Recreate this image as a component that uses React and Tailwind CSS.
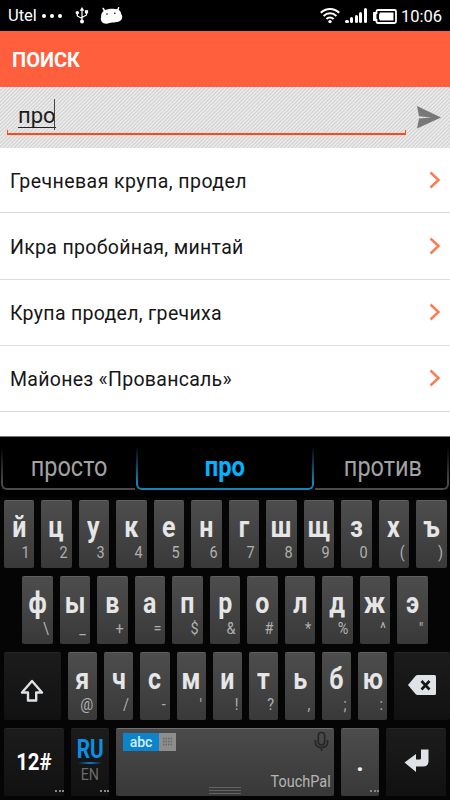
import React from "react";

const results = [
  { title: "Гречневая крупа, продел", height: "h-[65px]", tracking: "tracking-[0.440px]" },
  { title: "Икра пробойная, минтай", height: "h-[67px]", tracking: "tracking-[0.320px]" },
  { title: "Крупа продел, гречиха", height: "h-[66px]", tracking: "tracking-[0.310px]" },
  { title: "Майонез «Провансаль»", height: "h-[66px]", tracking: "tracking-[0.280px]" },
];

const topRow = [
  ["й", "1"],
  ["ц", "2"],
  ["у", "3"],
  ["к", "4"],
  ["е", "5"],
  ["н", "6"],
  ["г", "7"],
  ["ш", "8"],
  ["щ", "9"],
  ["з", "0"],
  ["х", "("],
  ["ъ", ")"],
];

const homeRow = [
  ["ф", "\\"],
  ["ы", "_"],
  ["в", "+"],
  ["а", "="],
  ["п", "$"],
  ["р", "&"],
  ["о", "#"],
  ["л", "*"],
  ["д", "%"],
  ["ж", "^"],
  ["э", "\""],
];

const bottomRow = [
  ["я", "@"],
  ["ч", "/"],
  ["с", "-"],
  ["м", "'"],
  ["и", "!"],
  ["т", "?"],
  ["ь", ","],
  ["б", ";"],
  ["ю", ":"],
];

const StatusBar = () => (
  <div className="flex h-[31px] items-center bg-black pl-2 pr-[8px] text-white">
    <span className="pt-[2px] text-[16.5px] leading-none">Utel</span>
    <div className="ml-[5px] flex gap-[4px] pt-px">
      <span className="size-1 rounded-full bg-white" />
      <span className="size-1 rounded-full bg-white" />
      <span className="size-1 rounded-full bg-white" />
    </div>
    {/* usb */}
    <svg className="ml-[13px]" width="14" height="17" viewBox="0 0 14 17" fill="none" stroke="white" strokeWidth="1.2">
      <path d="M7 3V14M7 11.5L2.3 9V6M7 10.5L11.5 8V5" />
      <path d="M7 0L9.3 3.8H4.7Z" fill="white" stroke="none" />
      <circle cx="7" cy="14.4" r="2" fill="white" stroke="none" />
      <circle cx="2.3" cy="5.8" r="1.7" fill="white" stroke="none" />
      <path d="M9.9 3.2h3.2v3.2H9.9z" fill="white" stroke="none" />
    </svg>
    {/* android head */}
    <svg className="ml-[11px]" width="23" height="17" viewBox="0 0 23 17">
      <path d="M3.2 1.5L5 4.5M18.6 .8L17.4 4" stroke="white" strokeWidth="1.5" strokeLinecap="round" />
      <path
        d="M4 3.5C8 1.5 14 1 18.5 2.5C20.5 4 21 5.5 21.2 7C22.8 9 22.5 11.5 21 13.3C18 16 13 15.2 9.5 16C6.5 17.2 3 16.7 1.8 14.8C.6 13 .4 11.5 1.2 10C.8 7.5 2 5.2 4 3.5Z"
        fill="white"
      />
      <circle cx="7" cy="7" r=".8" fill="black" />
      <circle cx="14.8" cy="6.3" r=".8" fill="black" />
    </svg>
    {/* wifi */}
    <svg className="ml-auto" width="20" height="17" viewBox="0 0 20 17" fill="none" stroke="white" strokeWidth="2">
      <path d="M.8 5.8C6 .6 14 .6 19.2 5.8" />
      <path d="M3.6 9C7.2 5.4 12.8 5.4 16.4 9" />
      <path d="M6.4 12C8.4 10 11.6 10 13.6 12" />
      <circle cx="10" cy="14.6" r="1.7" fill="white" stroke="none" />
    </svg>
    {/* signal */}
    <div className="ml-[5px] flex h-[15px] items-end gap-[1.5px]">
      <span className="size-[3.5px] rounded-full bg-white" />
      <span className="h-[6px] w-[3px] rounded-sm bg-white" />
      <span className="h-[8px] w-[3px] rounded-sm bg-white" />
      <span className="h-[11px] w-[3px] rounded-sm bg-white" />
      <span className="h-[15px] w-[3px] rounded-sm bg-white" />
    </div>
    {/* battery */}
    <svg className="ml-[6px] mt-px" width="24" height="15" viewBox="0 0 24 15">
      <path d="M5 1h16.5q1.5 0 1.5 1.5v10q0 1.5-1.5 1.5H5q-1.5 0-1.5-1.5V11H1V4h2.5V2.5Q3.5 1 5 1Z" fill="none" stroke="white" strokeWidth="1.8" />
      <path d="M.5 4h3v7h-3z" fill="white" />
      <path d="M7 3.5h13.5v8H7l-1-2V5.5z" fill="white" />
    </svg>
    <span className="ml-[4px] pt-[3px] text-[16.5px] leading-none">10:06</span>
  </div>
);

const SearchField = () => (
  <div className="flex h-[61px] bg-[repeating-linear-gradient(135deg,#d0d0d0_0px,#ededed_1.3px,#ededed_1.6px,#d0d0d0_2.65px)] pl-[7px]">
    <div className="flex h-[47.5px] w-[399px] flex-col justify-end">
      <div className="flex h-[31px] items-start pl-[11px]">
        <span className="mt-px h-[28px] border-b border-[#222] text-[22px] leading-[31px] text-[#1c1c1c]">про</span>
        <span className="-ml-[2px] h-[31px] w-px bg-[#444]" />
      </div>
      <div className="h-[5px] border-x-[1.5px] border-b-2 border-[#ff4a12]" />
    </div>
    <svg className="ml-[11px] mt-[18px]" width="25" height="25" viewBox="0 0 25 25">
      <path d="M0 1L24 12.5L0 23.5L2 13.5L14 12.4L2 11.3Z" fill="#787878" />
    </svg>
  </div>
);

const ResultItem = ({ item }) => (
  <li className={`flex items-center justify-between border-b border-[#dcdcdc] pl-[10px] pr-[9px] ${item.height}`}>
    <span className={`pt-[3px] text-[19.5px] leading-6 text-[#161616] ${item.tracking}`}>{item.title}</span>
    <svg className="-mt-px" width="12" height="18" viewBox="0 0 12 18" fill="none" stroke="#ff7a50" strokeWidth="2.4">
      <path d="M1.5 1.5L9.5 9L1.5 16.5" />
    </svg>
  </li>
);

const Suggestions = () => (
  <div className="relative flex h-[53px] gap-px px-px text-[27px] leading-[61px] text-[#a3a3a3]">
    <div className="flex w-[134px] justify-center rounded-bl-[6px] border-b-[2px] border-l-[2px] border-[#4a4a4a]">
      <span className="z-10 scale-x-[.87]">просто</span>
    </div>
    <div className="flex w-[179px] justify-center rounded-b-[6px] border-x-[2px] border-b-[2px] border-[#1585b8] font-bold">
      <span className="z-10 scale-x-[.88] text-[#00b4ff]">про</span>
    </div>
    <div className="flex w-[134px] justify-center rounded-br-[6px] border-b-[2px] border-r-[2px] border-[#4a4a4a] pl-[3px]">
      <span className="z-10 scale-x-[.87]">против</span>
    </div>
    {/* tab edges fade out towards the top */}
    <div className="absolute inset-x-0 top-0 h-[46px] bg-linear-to-b from-black from-20% to-transparent" />
  </div>
);

const Key = ({ label, hint, width }) => (
  <div
    className={`flex h-[68px] flex-col items-center rounded-[2px] border-t border-[#606060] bg-linear-to-b from-[#4d4d4d] to-[#393939] pt-[9px] ${width}`}
  >
    <span className="scale-x-[.86] text-[29px] font-bold leading-[34px] text-[#e6e6e6]">{label}</span>
    <span className="mr-[4px] origin-right scale-x-[.85] self-end text-[17px] leading-[17px] text-[#b0b0b0]">{hint}</span>
  </div>
);

const DarkKey = ({ className, children }) => (
  <div className={`flex h-[68px] rounded-[2px] border-t border-[#262626] bg-linear-to-b from-[#1c1c1c] to-[#111] ${className}`}>
    {children}
  </div>
);

const Dots = () => (
  <div className="flex gap-[1.5px]">
    <span className="size-[2px] bg-[#888]" />
    <span className="size-[2px] bg-[#888]" />
    <span className="size-[2px] bg-[#888]" />
  </div>
);

const Keyboard = () => (
  <div className="h-[364px] overflow-hidden border-t border-[#777] bg-black">
    <Suggestions />
    <div className="mt-[7px] h-[303px] bg-[#050505] pt-[3px]">
      <div className="flex gap-[7px] pl-[3.5px]">
        {topRow.map(([label, hint]) => (
          <Key key={label} label={label} hint={hint} width="w-[30.5px]" />
        ))}
      </div>
      <div className="mt-[8px] flex gap-[7px] pl-[22px]">
        {homeRow.map(([label, hint]) => (
          <Key key={label} label={label} hint={hint} width="w-[30.5px]" />
        ))}
      </div>
      <div className="mt-[8px] flex gap-[7px] pl-[4px]">
        <DarkKey className="w-[57px] items-center justify-center">
          {/* shift */}
          <svg className="mt-[9px]" width="24" height="24" viewBox="0 0 24 24" fill="none" stroke="#dde1e4" strokeWidth="2.4" strokeLinejoin="round">
            <path d="M12 2L22 13.5H16.2V21.5H8V13.5H2Z" />
          </svg>
        </DarkKey>
        {bottomRow.map(([label, hint]) => (
          <Key key={label} label={label} hint={hint} width="w-[29.25px]" />
        ))}
        <DarkKey className="w-[56px] items-center pl-[13px]">
          {/* backspace */}
          <svg className="-mt-[3px]" width="30" height="22" viewBox="0 0 30 22">
            <path d="M1 11L8.5 2Q9.5 1 10.5 1H27.5Q29 1 29 2.5V19.5Q29 21 27.5 21H10.5Q9.5 21 8.5 20Z" fill="#dfe3e7" />
            <path d="M14.5 7L22.5 15.5M22.5 7L14.5 15.5" stroke="#151515" strokeWidth="2.6" />
          </svg>
        </DarkKey>
      </div>
      <div className="mt-[8px] flex gap-[7px] pl-[4px]">
        <DarkKey className="w-[60px] flex-col items-center">
          <span className="mt-[21px] scale-x-[.85] text-[24px] font-bold leading-[24px] text-white">12#</span>
          <div className="mt-auto self-end pb-[4px]">
            <Dots />
          </div>
        </DarkKey>
        <DarkKey className="w-[38px] flex-col items-center">
          <span className="mt-[9px] scale-x-[.83] text-[25px] font-bold leading-[24px] text-[#0c8fe6]">RU</span>
          <div className="h-[2px] w-[24px] bg-linear-to-r from-transparent via-[#0c7cc8] to-transparent" />
          <span className="mt-[1px] scale-x-[.84] text-[17px] leading-[18px] text-[#6c6c6c]">EN</span>
          <div className="mt-auto self-end pb-[4px]">
            <Dots />
          </div>
        </DarkKey>
        <div className="flex h-[68px] w-[218px] flex-col rounded-[2px] border-t border-[#707070] bg-linear-to-b from-[#4b4b4b] to-[#383838]">
          <div className="flex justify-between pl-[7px] pr-[5px]">
            <div className="mt-[4px] flex h-[18px] w-[53px] bg-[#0c84cc]">
              <span className="w-[36px] text-center text-[14px] font-medium leading-[18px] text-[#d5ecfa]">abc</span>
              <svg width="17" height="18" viewBox="0 0 17 18">
                <path d="M0 0h17v18H0z" fill="#8d8d8d" />
                <path d="M4 5.5h9.5M4 8.5h9.5M4 11.5h9.5" stroke="#666" strokeWidth="1.5" strokeDasharray="1.5 1" />
              </svg>
            </div>
            {/* microphone */}
            <svg className="mt-[2px]" width="15" height="21" viewBox="0 0 15 21" fill="none" stroke="#272727" strokeWidth="1.7">
              <rect x="4.3" y="1.5" width="6.4" height="12.5" rx="3.2" />
              <path d="M1.4 9V11Q1.4 16.5 7.5 16.5Q13.6 16.5 13.6 11V9M7.5 16.5V20" />
            </svg>
          </div>
          <div className="mt-auto flex items-end justify-between pl-[93px] pr-[3px]">
            <div className="flex flex-col gap-[2px] pb-[2px]">
              <span className="h-px w-[32px] bg-[#646464]" />
              <span className="h-px w-[32px] bg-[#646464]" />
              <span className="h-px w-[32px] bg-[#646464]" />
            </div>
            <span className="mb-[5px] origin-right scale-x-[.85] text-[17px] leading-[20px] text-[#b5b5b5]">TouchPal</span>
          </div>
        </div>
        <div className="flex h-[68px] w-[38px] flex-col items-center rounded-[2px] border-t border-[#606060] bg-linear-to-b from-[#4d4d4d] to-[#393939]">
          <span className="mt-[19px] text-[26px] font-bold leading-[28px] text-[#f0f0f0]">.</span>
          <div className="mt-auto self-end pb-[4px]">
            <Dots />
          </div>
        </div>
        <DarkKey className="w-[60px] pl-[17px] pt-[19px]">
          {/* enter */}
          <svg width="27" height="25" viewBox="0 0 27 25">
            <path d="M18 1.5H25.5V13Q25.5 18.5 20 18.5H13V24L1.5 14.5L13 6V11.5H16.5Q18 11.5 18 10Z" fill="#dfe3e7" />
          </svg>
        </DarkKey>
      </div>
    </div>
  </div>
);

const App = () => {
  return (
    <div className="flex h-[800px] w-[450px] flex-col overflow-hidden bg-white font-['Roboto',sans-serif]">
      <StatusBar />
      <header className="flex h-[56px] items-center bg-[#ff5f3c] pl-[12px]">
        <h1 className="pt-[2px] text-[20px] font-bold text-white">ПОИСК</h1>
      </header>
      <SearchField />
      <ul className="h-[288px]">
        {results.map((item) => (
          <ResultItem key={item.title} item={item} />
        ))}
      </ul>
      <Keyboard />
    </div>
  );
};

export default App;
